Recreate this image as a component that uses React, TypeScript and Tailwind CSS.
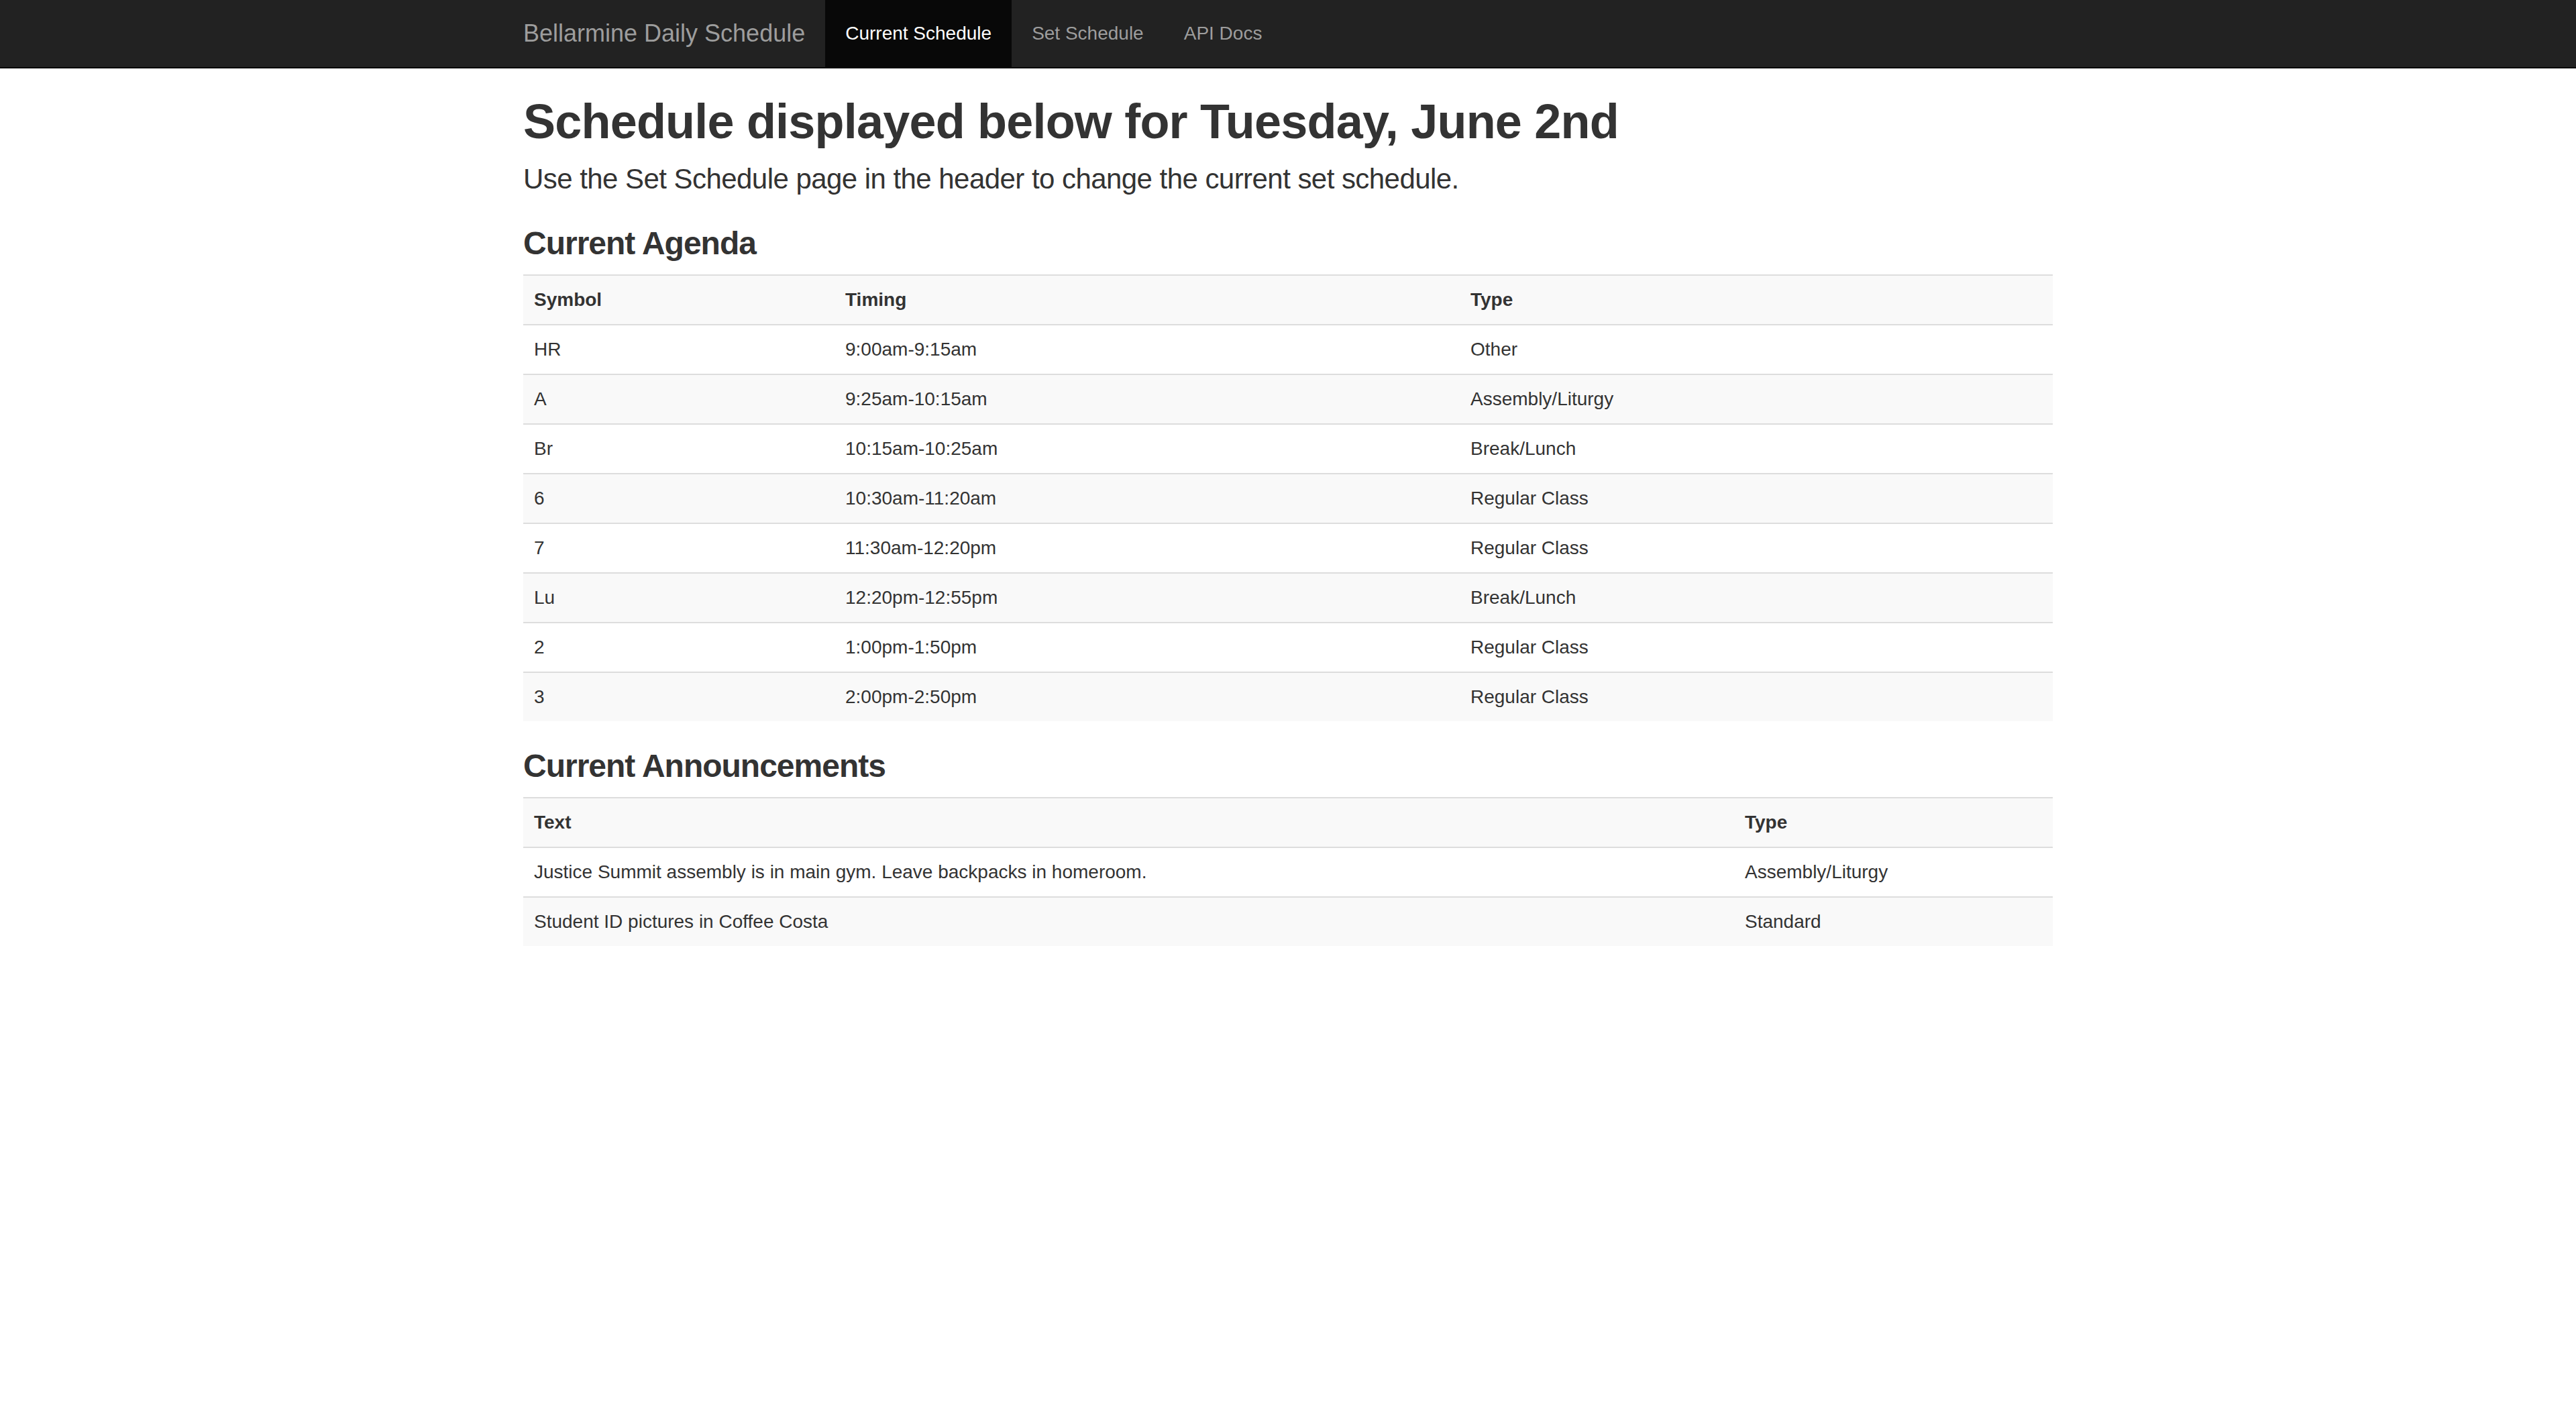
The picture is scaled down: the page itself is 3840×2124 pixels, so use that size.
import React from "react";

const agenda = [
  ["HR", "9:00am-9:15am", "Other"],
  ["A", "9:25am-10:15am", "Assembly/Liturgy"],
  ["Br", "10:15am-10:25am", "Break/Lunch"],
  ["6", "10:30am-11:20am", "Regular Class"],
  ["7", "11:30am-12:20pm", "Regular Class"],
  ["Lu", "12:20pm-12:55pm", "Break/Lunch"],
  ["2", "1:00pm-1:50pm", "Regular Class"],
  ["3", "2:00pm-2:50pm", "Regular Class"],
];

const announcements = [
  ["Justice Summit assembly is in main gym. Leave backpacks in homeroom.", "Assembly/Liturgy"],
  ["Student ID pictures in Coffee Costa", "Standard"],
];

function Row({ cells, index, header, widths }: { cells: string[]; index: number; header?: boolean; widths: string[] }) {
  return (
    <tr className={index % 2 === 0 ? "bg-[#f9f9f9]" : "bg-white"}>
      {cells.map((c, i) => (
        <td
          key={i}
          className={`border-t-2 border-[#dddddd] px-[16px] py-[16px] align-top text-[28px] leading-[40px] ${widths[i]} ${
            header ? "font-bold" : ""
          }`}
        >
          {c}
        </td>
      ))}
    </tr>
  );
}

export default function App() {
  const agendaWidths = ["w-[464px]", "w-[932px]", ""];
  const annWidths = ["w-[1805px]", ""];

  return (
    <div className="min-h-[2124px] bg-white text-[#333333] font-['Liberation_Sans',Arial,sans-serif]">
      <nav className="bg-[#222222] border-b-2 border-[#080808]">
        <div className="w-[2340px] mx-auto px-[30px] flex">
          <a className="-ml-[30px] px-[30px] py-[30px] text-[36px] leading-[40px] text-[#9d9d9d]">
            Bellarmine Daily Schedule
          </a>
          <ul className="flex">
            <li>
              <a className="block px-[30px] py-[30px] text-[28px] leading-[40px] bg-[#080808] text-white">
                Current Schedule
              </a>
            </li>
            <li>
              <a className="block px-[30px] py-[30px] text-[28px] leading-[40px] text-[#9d9d9d]">Set Schedule</a>
            </li>
            <li>
              <a className="block px-[30px] py-[30px] text-[28px] leading-[40px] text-[#9d9d9d]">API Docs</a>
            </li>
          </ul>
        </div>
      </nav>

      <div className="w-[2340px] mx-auto px-[30px] pt-[40px]">
        <h1 className="text-[72px] leading-[79px] font-bold tracking-[-0.8px] mb-[16px]">
          Schedule displayed below for Tuesday, June 2nd
        </h1>
        <p className="text-[42px] leading-[59px] font-light tracking-[-0.55px] mb-[40px]">
          Use the Set Schedule page in the header to change the current set schedule.
        </p>

        <h3 className="text-[48px] leading-[53px] font-bold tracking-[-1px] mb-[20px]">Current Agenda</h3>
        <table className="w-full border-collapse mb-[40px]">
          <tbody>
            <Row cells={["Symbol", "Timing", "Type"]} index={0} header widths={agendaWidths} />
            {agenda.map((r, i) => (
              <Row key={i} cells={r} index={i + 1} widths={agendaWidths} />
            ))}
          </tbody>
        </table>

        <h3 className="text-[48px] leading-[53px] font-bold tracking-[-1px] mb-[20px]">Current Announcements</h3>
        <table className="w-full border-collapse mb-[40px]">
          <tbody>
            <Row cells={["Text", "Type"]} index={0} header widths={annWidths} />
            {announcements.map((r, i) => (
              <Row key={i} cells={r} index={i + 1} widths={annWidths} />
            ))}
          </tbody>
        </table>
      </div>
    </div>
  );
}
